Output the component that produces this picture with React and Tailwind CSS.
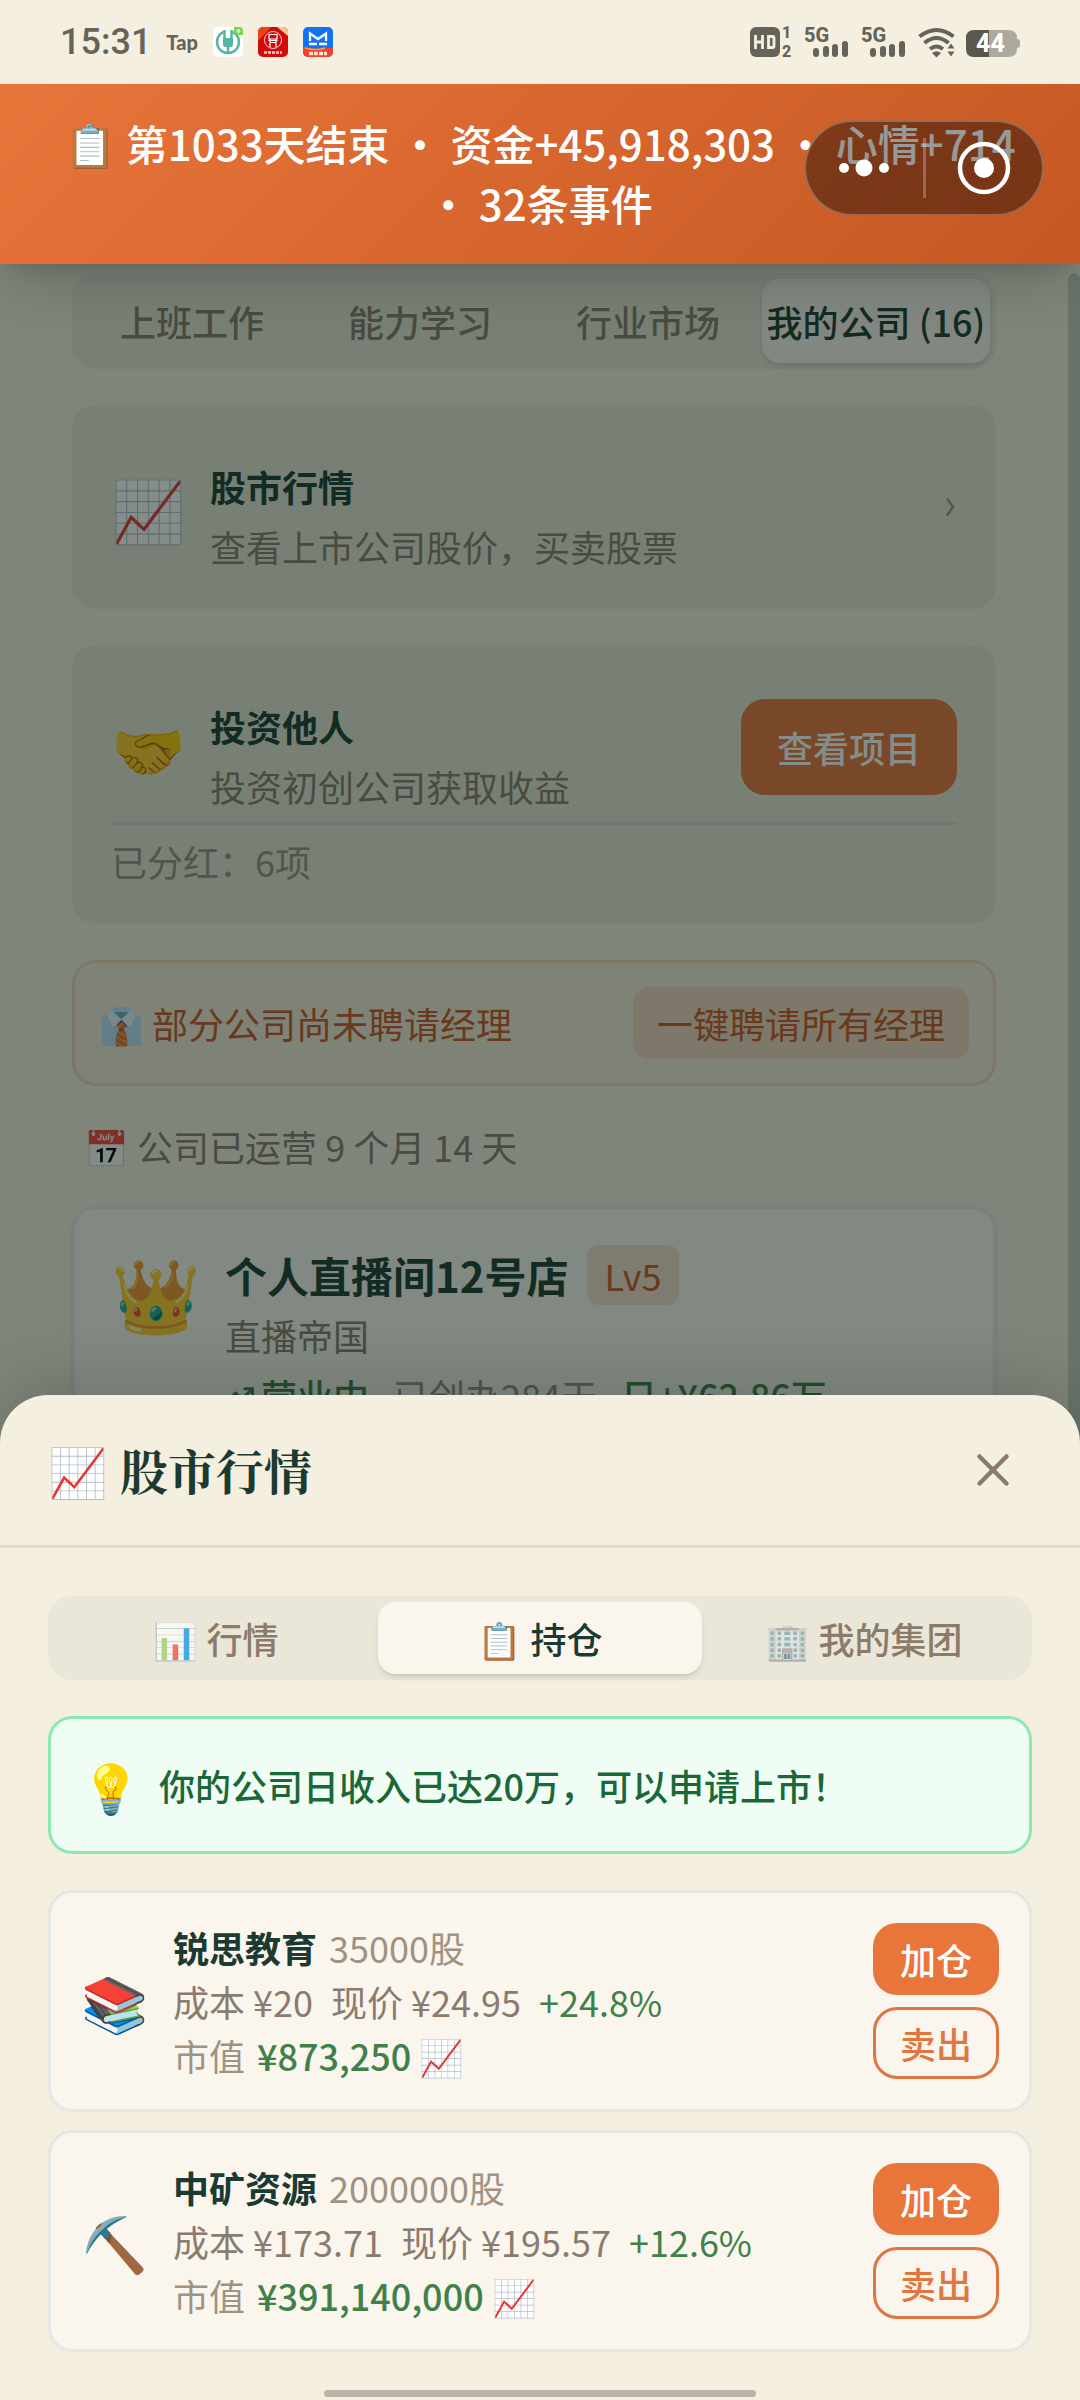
import React, { useState } from 'react';
import { TrendingUp, X } from 'lucide-react';

const pageTabs = ['上班工作', '能力学习', '行业市场', '我的公司 (16)'];

const sheetTabs = [
  { id: 'market', icon: '📊', label: '行情' },
  { id: 'holding', icon: '📋', label: '持仓' },
  { id: 'group', icon: '🏢', label: '我的集团' },
];

const holdings = [
  { icon: '📚', name: '锐思教育', shares: '35000股', cost: '¥20', price: '¥24.95', change: '+24.8%', value: '¥873,250' },
  { icon: '⛏️', name: '中矿资源', shares: '2000000股', cost: '¥173.71', price: '¥195.57', change: '+12.6%', value: '¥391,140,000' },
];

function Signal() {
  return (
    <svg width="48" height="48" viewBox="0 0 48 48" fill="#65635a">
      <text x="0" y="24" fontSize="20" fontWeight="800" fontFamily="Roboto, sans-serif">5G</text>
      <rect x="9" y="30" width="6" height="9" rx="3" />
      <rect x="19" y="28" width="6" height="11" rx="3" />
      <rect x="28" y="26" width="6" height="13" rx="3" />
      <rect x="38" y="23" width="6" height="16" rx="3" />
    </svg>
  );
}

function StatusBar() {
  return (
    <header className="flex h-[84px] shrink-0 items-center justify-between px-[60px] text-[#65635a]">
      <div className="flex items-center gap-[15px]">
        <span className="font-[Roboto,sans-serif] text-[36px] leading-[48px] font-medium">15:31</span>
        <span className="font-[Lato,sans-serif] text-[20px] leading-6 font-black">Tap</span>
        <svg width="30" height="30" viewBox="0 0 30 30">
          <rect width="30" height="30" rx="5" fill="#fff" />
          <circle cx="15" cy="15" r="11" fill="none" stroke="#55b5a2" strokeWidth="2.5" />
          <rect x="10.500" y="2" width="9" height="4" fill="#fff" />
          <path d="M11.500 3v10M18.500 3v10M15 13v13" stroke="#55b5a2" strokeWidth="2.5" />
          <path d="M10 11h10v7q0 2-2 2h-6q-2 0-2-2z" fill="#55b5a2" />
          <path d="M21 0h5a4 4 0 0 1 4 4v4h-5a4 4 0 0 1-4-4z" fill="#7ed04b" />
          <circle cx="25.500" cy="4" r="2" fill="#d9f5c4" />
        </svg>
        <svg width="30" height="30" viewBox="0 0 30 30">
          <rect width="30" height="30" rx="5" fill="#d20a0a" />
          <path d="M5 0h8L0 14V5a5 5 0 0 1 5-5z" fill="#f0430c" />
          <path d="M19 0h6a5 5 0 0 1 5 5v4z" fill="#f3c79a" />
          <circle cx="15" cy="13" r="8.500" fill="none" stroke="#fff" strokeWidth="0.800" />
          <path d="M11 7.500h8v4.500h-8zM12 15.500h6M12 12v8M18 12v8M10.500 13.500h9" stroke="#fff" strokeWidth="1.200" fill="none" />
          <path d="M6 25.500h18" stroke="#f7c9c0" strokeWidth="2.500" strokeDasharray="3 1" />
        </svg>
        <svg width="30" height="30" viewBox="0 0 30 30">
          <rect width="30" height="30" rx="5" fill="#1272f4" />
          <path d="M7 14V6.500l8 5.500 8-5.500V14M6 17h8M16 17h8" stroke="#fff" strokeWidth="2.300" fill="none" />
          <path d="M0 20q15 4 30 0v5a5 5 0 0 1-5 5H5a5 5 0 0 1-5-5z" fill="#f4402c" />
          <path d="M2 21q12 3 20 0" stroke="#f5a13a" strokeWidth="1.500" fill="none" />
          <path d="M6 26.500h18" stroke="#fde3d0" strokeWidth="3.500" strokeDasharray="4 1" />
        </svg>
      </div>
      <div className="flex items-center gap-[9px]">
        <svg width="45" height="48" viewBox="0 0 45 48" fill="#65635a">
          <rect y="9" width="30" height="30" rx="6" />
          <path d="M5.500 17v14M12.500 17v14M5.500 24h7M18.500 18.500v11h4q1.500 0 1.500-1.500v-8q0-1.500-1.500-1.500z" stroke="#f5efdf" strokeWidth="2.800" fill="none" />
          <text x="32" y="20" fontSize="16" fontWeight="800" fontFamily="Roboto, sans-serif">1</text>
          <text x="32" y="39" fontSize="16" fontWeight="800" fontFamily="Roboto, sans-serif">2</text>
        </svg>
        <Signal />
        <Signal />
        <svg width="39" height="48" viewBox="0 0 39 48" fill="none" stroke="#65635a" strokeWidth="4">
          <path d="M1.500 18.500q17-13 34 0M6.500 25q12-10 24 0M12 31q6.500-5 13 0" />
          <path d="M14 35q4.500-3.500 9 0l-4.500 4.500z" fill="#65635a" stroke="none" />
          <path d="M29.500 30.500l3.500-5 3.500 5zM29.500 33.500h7l-3.500 5z" fill="#65635a" stroke="none" />
        </svg>
        <svg width="54" height="48" viewBox="0 0 54 48">
          <path d="M8 12h34q9 0 9 8v11q0 8-9 8H8z" fill="#aca99f" />
          <path d="M23 12H8q-8 0-8 8v11q0 8 8 8h15z" fill="#5a574f" />
          <path d="M51 21q3 0 3 3v3q0 3-3 3z" fill="#aca99f" />
          <text x="10" y="34" fontSize="25" fontWeight="800" fontFamily="Roboto, sans-serif" fill="#fff">44</text>
        </svg>
      </div>
    </header>
  );
}

function Banner() {
  return (
    <div className="relative z-30 shrink-0 bg-linear-135 from-[#e8753a] to-[#c65722] px-12 pt-[29px] pb-[31px] text-center text-[42px] leading-[60px] font-medium text-white shadow-[0_30px_45px_-9px_rgba(0,0,0,0.15),0_12px_18px_-12px_rgba(0,0,0,0.15)]">
      <p>📋 第1033天结束 ・ 资金+45,918,303 ・ 心情+714 ・ 32条事件</p>
      <div className="absolute top-9 right-9 flex h-24 w-60 items-center rounded-full border-2 border-white/25 bg-black/40">
        <button aria-label="更多" className="flex flex-1 items-center justify-center">
          <svg width="52" height="20" viewBox="0 0 52 20" fill="#fff">
            <circle cx="6" cy="10" r="5" />
            <circle cx="26" cy="10" r="8.500" />
            <circle cx="46" cy="10" r="5" />
          </svg>
        </button>
        <span className="h-[60px] w-[3px] bg-white/25" />
        <button aria-label="关闭小程序" className="flex flex-1 items-center justify-center">
          <svg width="54" height="54" viewBox="0 0 54 54" fill="#fff">
            <circle cx="27" cy="27" r="24" fill="none" stroke="#fff" strokeWidth="4.500" />
            <circle cx="27" cy="27" r="10" />
          </svg>
        </button>
      </div>
    </div>
  );
}

function CardHeading({ title, text }) {
  return (
    <div className="flex flex-1 flex-col gap-1.5 pt-3 text-[36px]">
      <h3 className="leading-[60px] font-bold text-[#1b3a31]">{title}</h3>
      <p className="leading-[48px] text-[#8b7b6b]">{text}</p>
    </div>
  );
}

function CompanyPage() {
  return (
    <main className="-mb-12 flex min-h-0 flex-1 overflow-hidden pt-[9px]">
      <div className="flex min-w-0 flex-1 flex-col gap-9 px-[72px]">
        <nav className="flex shrink-0 rounded-3xl bg-[#e6e5d6] p-1.5">
          {pageTabs.map((tab, i) => (
            <button
              key={tab}
              className={`flex-1 basis-0 rounded-[18px] py-[18px] text-[36px] leading-[48px] font-medium whitespace-nowrap ${
                i === 3 ? 'bg-[#faf5ed] text-[#1b3a31] shadow-md' : 'text-[#8b7b6b]'
              }`}
            >
              {tab}
            </button>
          ))}
        </nav>

        <section className="flex shrink-0 items-center rounded-3xl bg-[#e6e5d6] p-[39px]">
          <span className="w-[99px] text-[60px] leading-[60px]">📈</span>
          <CardHeading title="股市行情" text="查看上市公司股价，买卖股票" />
          <svg width="12" height="20" viewBox="0 0 12 20" fill="none" stroke="#9f9282" strokeWidth="2.500">
            <path d="M2 1.500l6 8.500-6 8.500" />
          </svg>
        </section>

        <section className="shrink-0 rounded-3xl bg-[#e6e5d6] p-[39px]">
          <div className="flex items-center pb-3">
            <span className="w-[99px] text-[60px] leading-[60px]">🤝</span>
            <CardHeading title="投资他人" text="投资初创公司获取收益" />
            <button className="rounded-3xl bg-[#e8753a] px-9 py-6 text-[36px] leading-[48px] font-medium text-white">查看项目</button>
          </div>
          <p className="border-t-[3px] border-[#d6d6cc] pt-3 text-[36px] leading-[48px] text-[#9a8e80]">已分红：6项</p>
        </section>

        <section className="flex shrink-0 items-center justify-between rounded-3xl border-[3px] border-[#f2d0b6] bg-[#f4ebd9] p-6">
          <p className="text-[36px] leading-[48px] text-[#c65722]">👔 部分公司尚未聘请经理</p>
          <button className="rounded-2xl bg-[#f3d5c0] px-6 py-3 text-[36px] leading-[48px] text-[#c65722]">一键聘请所有经理</button>
        </section>

        <p className="shrink-0 px-3 text-[36px] leading-[48px] text-[#8b7b6b]">📅 公司已运营 9 个月 14 天</p>

        <section className="flex shrink-0 rounded-3xl border-[3px] border-[#e5e7eb] bg-[#faf6ee] p-9 shadow-md">
          <span className="w-[114px] pt-1 text-[72px] leading-[84px]">👑</span>
          <div>
            <div className="flex items-center gap-[18px]">
              <h3 className="text-[42px] leading-[60px] font-bold text-[#1b3a31]">个人直播间12号店</h3>
              <span className="rounded-xl bg-[#f3dccb] px-[18px] py-1.5 text-[36px] leading-[48px] text-[#c65722]">Lv5</span>
            </div>
            <p className="text-[36px] leading-[60px] text-[#8b7b6b]">直播帝国</p>
            <p className="flex gap-6 text-[36px] leading-[60px]">
              <span className="flex items-center gap-1.5 font-medium text-[#3f8148]">
                <TrendingUp size={30} strokeWidth={2.5} />
                营业中
              </span>
              <span className="text-[#9a8e80]">已创办284天</span>
              <span className="font-medium text-[#3f8148]">日+¥62.86万</span>
            </p>
          </div>
        </section>
      </div>
      <div className="w-3 shrink-0 rounded-t-full bg-[#c6cabf]" />
    </main>
  );
}

function HoldingCard({ item }) {
  return (
    <li className="flex items-center rounded-3xl border-[3px] border-[#e5e7e6] bg-[#faf6ee] p-[30px]">
      <span className="w-[92px] text-[54px] leading-[60px]">{item.icon}</span>
      <div className="flex flex-1 flex-col gap-1.5 text-[36px] leading-[48px] text-[#8b7b6d]">
        <p className="flex gap-3">
          <strong className="font-bold text-[#1b3a31]">{item.name}</strong>
          <span className="text-[#9f9282]">{item.shares}</span>
        </p>
        <p className="flex gap-[18px]">
          <span>成本 {item.cost}</span>
          <span>现价 {item.price}</span>
          <span className="text-[#3f8148]">{item.change}</span>
        </p>
        <p className="flex gap-3">
          <span className="text-[#9f9282]">市值</span>
          <span className="font-medium text-[#3f8148]">{item.value} 📈</span>
        </p>
      </div>
      <div className="flex flex-col gap-3 text-[36px] leading-[48px] font-medium">
        <button className="rounded-3xl bg-[#e8753a] px-[27px] py-3 text-white">加仓</button>
        <button className="rounded-3xl border-[3px] border-[#dd7742] px-6 py-[9px] text-[#e07640]">卖出</button>
      </div>
    </li>
  );
}

function StockSheet() {
  const [active, setActive] = useState('holding');

  return (
    <section className="relative z-20 shrink-0 rounded-t-[48px] bg-[#f5efdf] shadow-[0_-12px_60px_rgba(0,0,0,0.15)]">
      <div className="flex items-center justify-between border-b-[3px] border-[#dfdfcf] px-12 py-[39px]">
        <h2 className="font-['Noto_Serif_CJK_SC','Noto_Sans_CJK_SC',serif] text-[48px] leading-[72px] font-bold text-[#1b3a31]">📈 股市行情</h2>
        <button aria-label="关闭" className="px-3 text-[#8b7b6b]">
          <X size={54} strokeWidth={2} />
        </button>
      </div>

      <div className="flex flex-col gap-9 px-12 pt-12">
        <div className="flex rounded-3xl bg-[#eae7d8] p-1.5">
          {sheetTabs.map((tab) => (
            <button
              key={tab.id}
              onClick={() => setActive(tab.id)}
              className={`flex-1 basis-0 rounded-[18px] py-3 text-[36px] leading-[48px] font-medium ${
                active === tab.id ? 'bg-[#faf6ee] text-[#1b3a31] shadow-md' : 'text-[#8b7b6b]'
              }`}
            >
              <span className={active === tab.id ? '' : 'opacity-70'}>{tab.icon}</span> {tab.label}
            </button>
          ))}
        </div>

        <div className="flex items-center gap-[18px] rounded-3xl border-[3px] border-[#8ceab0] bg-[#f0fdf4] px-[30px] py-9">
          <span className="text-[48px] leading-[60px]">💡</span>
          <p className="text-[36px] leading-[60px] font-medium text-[#1a6838]">你的公司日收入已达20万，可以申请上市！</p>
        </div>

        <ul className="flex flex-col gap-[18px]">
          {holdings.map((item) => (
            <HoldingCard key={item.name} item={item} />
          ))}
        </ul>
      </div>
      <div className="mx-auto mt-[38px] mb-[3px] h-[7px] w-2/5 rounded-full bg-[#b9b4a7]" />
    </section>
  );
}

export default function App() {
  return (
    <div lang="zh-CN" className="flex h-screen flex-col overflow-hidden bg-[#f5efdf] font-['Noto_Sans_CJK_SC',sans-serif]">
      <StatusBar />
      <Banner />
      <div className="relative flex min-h-0 flex-1 flex-col">
        <CompanyPage />
        <div className="absolute inset-0 z-10 bg-[#0a1c15]/50" />
        <StockSheet />
      </div>
    </div>
  );
}
